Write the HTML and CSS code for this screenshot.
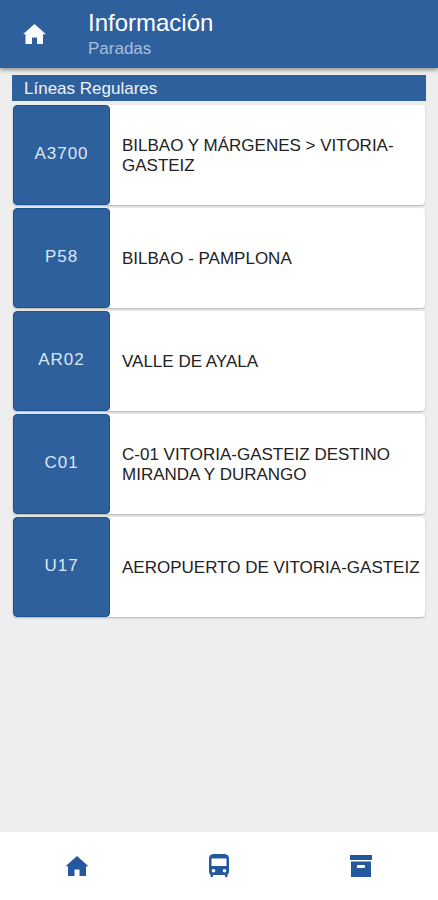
FILE: index.html
```html
<!DOCTYPE html>
<html lang="es">
<head>
  <meta charset="UTF-8">
  <meta name="viewport" content="width=device-width, initial-scale=1.0">
  <link rel="stylesheet" href="styles.css">
  <title>Información</title>
</head>
<body>

  <header class="toolbar">
    <a href="#" class="home-link" aria-label="Inicio">
      <svg class="icon" viewBox="0 0 24 24"><path d="M12.500 2 1 12.300H3.500V22h6.500v-6.500h5V22h6v-9.700h3z"/></svg>
    </a>
    <div class="titles">
      <h1>Información</h1>
      <p>Paradas</p>
    </div>
  </header>

  <main class="content">
    <h2 class="divider">Líneas Regulares</h2>
    <ul class="lines">
      <li class="line">
        <button class="code">A3700</button>
        <p class="name">BILBAO Y MÁRGENES &gt; VITORIA-GASTEIZ</p>
      </li>
      <li class="line">
        <button class="code">P58</button>
        <p class="name">BILBAO - PAMPLONA</p>
      </li>
      <li class="line">
        <button class="code">AR02</button>
        <p class="name">VALLE DE AYALA</p>
      </li>
      <li class="line">
        <button class="code">C01</button>
        <p class="name">C-01 VITORIA-GASTEIZ DESTINO MIRANDA Y DURANGO</p>
      </li>
      <li class="line">
        <button class="code">U17</button>
        <p class="name">AEROPUERTO DE VITORIA-GASTEIZ</p>
      </li>
    </ul>
  </main>

  <nav class="tabs">
    <a href="#" class="tab" aria-label="Inicio">
      <svg class="icon" viewBox="0 0 24 24"><path d="M12 2 0.500 12.300H3V22h6.500v-6.500h5V22h6.500v-9.700h2.500z"/></svg>
    </a>
    <a href="#" class="tab" aria-label="Autobuses">
      <svg class="icon" viewBox="0 0 24 24"><path fill-rule="evenodd" d="M6.500 0h11Q22 0.300 22 4.500V18q0 1.800-1.500 2.500V22q0 1.300-1.300 1.300T18 22v-1H6v1q0 1.300-1.200 1.300T3.500 22v-1.500Q2 19.800 2 18V4.500Q2 0.300 6.500 0zM4.500 4.500v7.500h15V4.500zM6.500 15a1.800 1.800 0 1 0 0 3.600 1.800 1.800 0 0 0 0-3.600zm11 0a1.800 1.800 0 1 0 0 3.600 1.800 1.800 0 0 0 0-3.600z"/></svg>
    </a>
    <a href="#" class="tab" aria-label="Archivo">
      <svg class="icon" viewBox="0 0 24 24"><path fill-rule="evenodd" d="M1 1h22v5H1zM2 7.500h20V23H2zM8.800 11q-.8 0-.8.800v1.400q0 .8.800.800h6.400q.8 0 .8-.8v-1.400q0-.8-.8-.8z"/></svg>
    </a>
  </nav>

</body>
</html>
```
FILE: styles.css
```css
*{
  margin: 0;
  padding: 0;
  box-sizing: border-box;
}
body{
  min-height: 100vh;
  display: flex;
  flex-direction: column;
  background: #eeeeee;
  font-family: "Liberation Sans", Arial, sans-serif;
  font-size: 17px;
  line-height: 20px;
  color: #222;
}
.icon{
  display: block;
  width: 24px;
  height: 24px;
  fill: currentColor;
}
.toolbar{
  display: flex;
  align-items: center;
  height: 68px;
  padding: 0 22px;
  gap: 42px;
  background: #2f609e;
  color: #fff;
  box-shadow: 0 2px 4px rgba(0,0,0,0.4);
}
.home-link{
  color: #fff;
}
.titles{
  padding-top: 2px;
}
.titles h1{
  font-size: 24px;
  font-weight: normal;
  line-height: 28px;
}
.titles p{
  line-height: 24px;
  color: #a9bfdc;
}
.content{
  flex: 1;
  padding: 7px 12px;
}
.divider{
  padding: 4px 12px 2px;
  background: #2f609e;
  color: #eef3fa;
  font-size: 17px;
  font-weight: normal;
}
.lines{
  display: flex;
  flex-direction: column;
  gap: 3px;
  padding: 4px 1px;
  list-style: none;
}
.line{
  display: flex;
  min-height: 100px;
  background: #fff;
  border-radius: 4px;
  box-shadow: 0 1px 2px rgba(0,0,0,0.25);
}
.code{
  flex: 0 0 97px;
  padding-bottom: 2px;
  background: #2f609e;
  border: 1px solid #1a5394;
  border-radius: 4px;
  color: #dce7f5;
  font: inherit;
  letter-spacing: 1px;
}
.name{
  flex: 1;
  align-self: center;
  padding-top: 2px;
  padding-left: 12px;
}
.tabs{
  display: flex;
  height: 68px;
  padding: 0 6px;
  background: #fff;
}
.tab{
  flex: 1;
  display: flex;
  align-items: center;
  justify-content: center;
  color: #2459a0;
}
```
